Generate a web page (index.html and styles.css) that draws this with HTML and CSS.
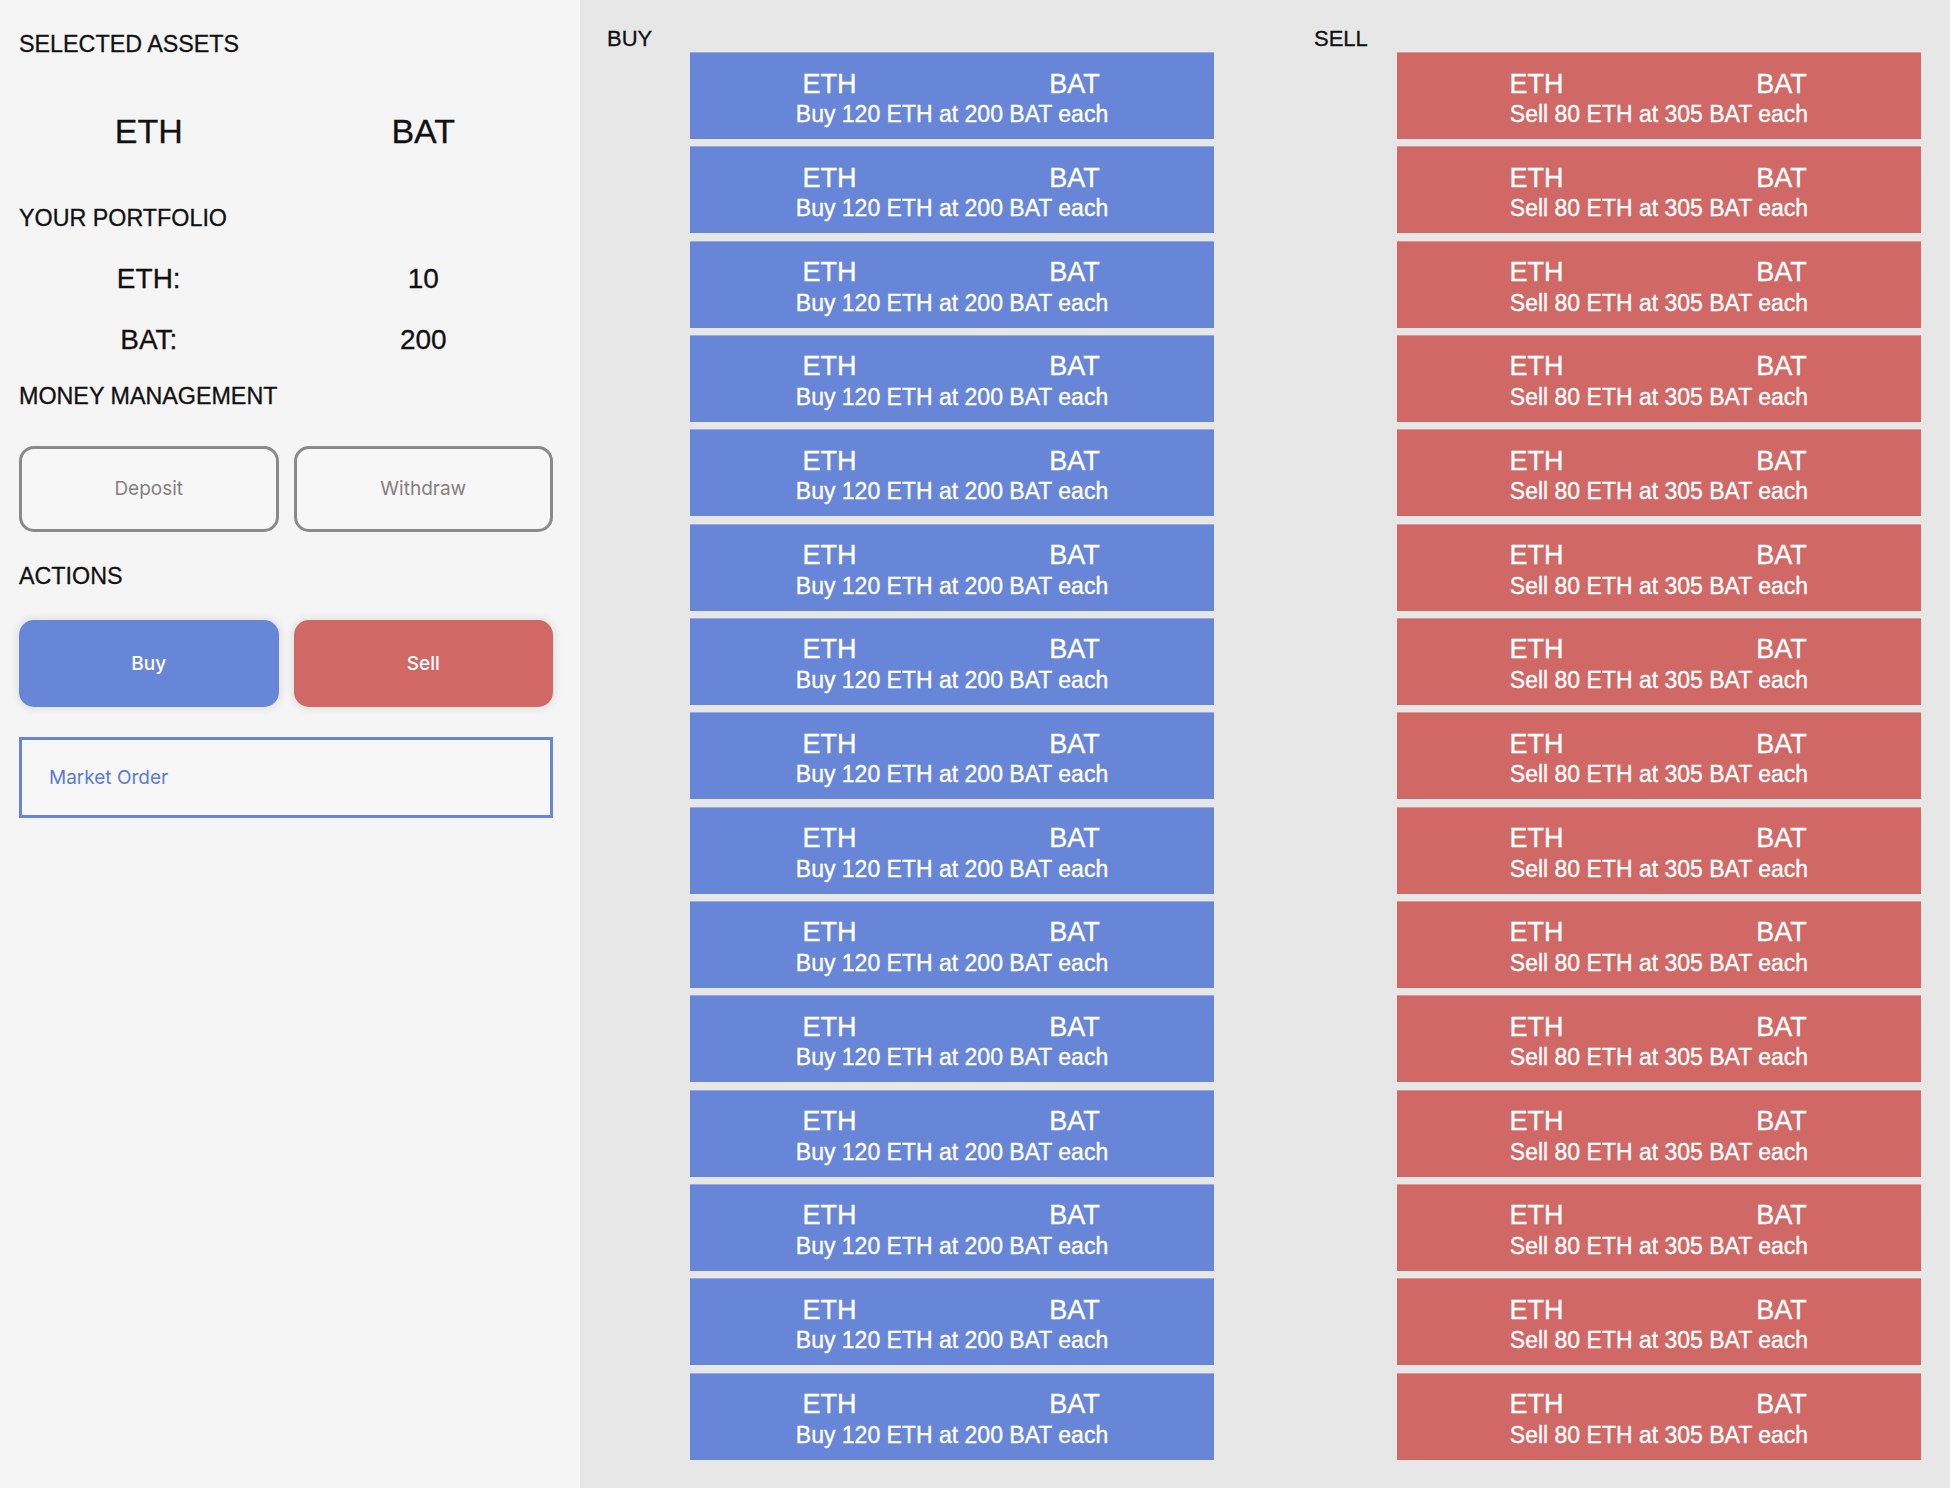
FILE: index.html
```html
<!DOCTYPE html>
<html lang="en">
<head>
<meta charset="utf-8">
<title>Exchange</title>
<link rel="stylesheet" href="styles.css">
</head>
<body>
<div class="app">
  <aside class="panel">
    <h2 class="heading heading-first">SELECTED ASSETS</h2>
    <div class="pair pair-big"><span>ETH</span><span>BAT</span></div>
    <h2 class="heading heading-portfolio">YOUR PORTFOLIO</h2>
    <div class="pair pair-bal pair-bal-first"><span>ETH:</span><span>10</span></div>
    <div class="pair pair-bal pair-bal-second"><span>BAT:</span><span>200</span></div>
    <h2 class="heading heading-money">MONEY MANAGEMENT</h2>
    <div class="btn-row btn-row-money">
      <button class="btn btn-outline">Deposit</button>
      <button class="btn btn-outline">Withdraw</button>
    </div>
    <h2 class="heading heading-actions">ACTIONS</h2>
    <div class="btn-row btn-row-actions">
      <button class="btn btn-buy">Buy</button>
      <button class="btn btn-sell">Sell</button>
    </div>
    <div class="order-type">Market Order</div>
  </aside>
  <main class="book">
    <section class="side">
      <h3 class="side-title">BUY</h3>
      <div class="orders">
        <div class="order order-buy"><div class="order-pair"><span>ETH</span><span>BAT</span></div><div class="order-desc">Buy 120 ETH at 200 BAT each</div></div>
        <div class="order order-buy"><div class="order-pair"><span>ETH</span><span>BAT</span></div><div class="order-desc">Buy 120 ETH at 200 BAT each</div></div>
        <div class="order order-buy"><div class="order-pair"><span>ETH</span><span>BAT</span></div><div class="order-desc">Buy 120 ETH at 200 BAT each</div></div>
        <div class="order order-buy"><div class="order-pair"><span>ETH</span><span>BAT</span></div><div class="order-desc">Buy 120 ETH at 200 BAT each</div></div>
        <div class="order order-buy"><div class="order-pair"><span>ETH</span><span>BAT</span></div><div class="order-desc">Buy 120 ETH at 200 BAT each</div></div>
        <div class="order order-buy"><div class="order-pair"><span>ETH</span><span>BAT</span></div><div class="order-desc">Buy 120 ETH at 200 BAT each</div></div>
        <div class="order order-buy"><div class="order-pair"><span>ETH</span><span>BAT</span></div><div class="order-desc">Buy 120 ETH at 200 BAT each</div></div>
        <div class="order order-buy"><div class="order-pair"><span>ETH</span><span>BAT</span></div><div class="order-desc">Buy 120 ETH at 200 BAT each</div></div>
        <div class="order order-buy"><div class="order-pair"><span>ETH</span><span>BAT</span></div><div class="order-desc">Buy 120 ETH at 200 BAT each</div></div>
        <div class="order order-buy"><div class="order-pair"><span>ETH</span><span>BAT</span></div><div class="order-desc">Buy 120 ETH at 200 BAT each</div></div>
        <div class="order order-buy"><div class="order-pair"><span>ETH</span><span>BAT</span></div><div class="order-desc">Buy 120 ETH at 200 BAT each</div></div>
        <div class="order order-buy"><div class="order-pair"><span>ETH</span><span>BAT</span></div><div class="order-desc">Buy 120 ETH at 200 BAT each</div></div>
        <div class="order order-buy"><div class="order-pair"><span>ETH</span><span>BAT</span></div><div class="order-desc">Buy 120 ETH at 200 BAT each</div></div>
        <div class="order order-buy"><div class="order-pair"><span>ETH</span><span>BAT</span></div><div class="order-desc">Buy 120 ETH at 200 BAT each</div></div>
        <div class="order order-buy"><div class="order-pair"><span>ETH</span><span>BAT</span></div><div class="order-desc">Buy 120 ETH at 200 BAT each</div></div>
      </div>
    </section>
    <section class="side">
      <h3 class="side-title">SELL</h3>
      <div class="orders">
        <div class="order order-sell"><div class="order-pair"><span>ETH</span><span>BAT</span></div><div class="order-desc">Sell 80 ETH at 305 BAT each</div></div>
        <div class="order order-sell"><div class="order-pair"><span>ETH</span><span>BAT</span></div><div class="order-desc">Sell 80 ETH at 305 BAT each</div></div>
        <div class="order order-sell"><div class="order-pair"><span>ETH</span><span>BAT</span></div><div class="order-desc">Sell 80 ETH at 305 BAT each</div></div>
        <div class="order order-sell"><div class="order-pair"><span>ETH</span><span>BAT</span></div><div class="order-desc">Sell 80 ETH at 305 BAT each</div></div>
        <div class="order order-sell"><div class="order-pair"><span>ETH</span><span>BAT</span></div><div class="order-desc">Sell 80 ETH at 305 BAT each</div></div>
        <div class="order order-sell"><div class="order-pair"><span>ETH</span><span>BAT</span></div><div class="order-desc">Sell 80 ETH at 305 BAT each</div></div>
        <div class="order order-sell"><div class="order-pair"><span>ETH</span><span>BAT</span></div><div class="order-desc">Sell 80 ETH at 305 BAT each</div></div>
        <div class="order order-sell"><div class="order-pair"><span>ETH</span><span>BAT</span></div><div class="order-desc">Sell 80 ETH at 305 BAT each</div></div>
        <div class="order order-sell"><div class="order-pair"><span>ETH</span><span>BAT</span></div><div class="order-desc">Sell 80 ETH at 305 BAT each</div></div>
        <div class="order order-sell"><div class="order-pair"><span>ETH</span><span>BAT</span></div><div class="order-desc">Sell 80 ETH at 305 BAT each</div></div>
        <div class="order order-sell"><div class="order-pair"><span>ETH</span><span>BAT</span></div><div class="order-desc">Sell 80 ETH at 305 BAT each</div></div>
        <div class="order order-sell"><div class="order-pair"><span>ETH</span><span>BAT</span></div><div class="order-desc">Sell 80 ETH at 305 BAT each</div></div>
        <div class="order order-sell"><div class="order-pair"><span>ETH</span><span>BAT</span></div><div class="order-desc">Sell 80 ETH at 305 BAT each</div></div>
        <div class="order order-sell"><div class="order-pair"><span>ETH</span><span>BAT</span></div><div class="order-desc">Sell 80 ETH at 305 BAT each</div></div>
        <div class="order order-sell"><div class="order-pair"><span>ETH</span><span>BAT</span></div><div class="order-desc">Sell 80 ETH at 305 BAT each</div></div>
      </div>
    </section>
  </main>
</div>
</body>
</html>
```
FILE: styles.css
```css
* { box-sizing: border-box; }
html, body {
  margin: 0;
  padding: 0;
  height: 100%;
  overflow: hidden;
}
body {
  font-family: "Liberation Sans", Arial, sans-serif;
  color: #111;
  background: #e7e7e7;
}
.app {
  display: flex;
  height: 100vh;
}
.panel {
  width: 580px;
  flex: 0 0 580px;
  background: #f5f5f5;
  padding: 33px 27px 0 19px;
  display: flex;
  flex-direction: column;
  -webkit-text-stroke: 0.3px currentColor;
}
.heading {
  margin: 0;
  font-size: 23.3px;
  line-height: 23px;
  font-weight: normal;
  color: #111;
}
.heading-portfolio { margin-top: 59px; }
.heading-money { margin-top: 31px; }
.heading-actions { margin-top: 33px; }

.pair {
  display: grid;
  grid-template-columns: 1fr 1fr;
  column-gap: 15px;
  text-align: center;
}
.pair-big {
  margin-top: 58px;
  font-size: 34px;
  line-height: 34px;
}
.pair-bal {
  font-size: 28px;
  line-height: 28px;
}
.pair-bal-first { margin-top: 34.7px; }
.pair-bal-second { margin-top: 33px; }

.btn-row {
  display: grid;
  grid-template-columns: 1fr 1fr;
  column-gap: 15px;
}
.btn-row-money { margin-top: 38.3px; }
.btn-row-actions { margin-top: 32.3px; }
.btn {
  font-family: Inter, "Liberation Sans", sans-serif;
  font-size: 19px;
  display: flex;
  align-items: center;
  justify-content: center;
  border-radius: 15px;
  padding: 0;
  margin: 0;
  -webkit-text-stroke: 0;
}
.btn-outline {
  height: 85.7px;
  background: #f7f7f7;
  border: 3px solid #8a8a8a;
  color: #857f7f;
}
.btn-buy,
.btn-sell {
  height: 87.3px;
  border: none;
  color: #ffffff;
  font-weight: 500;
  box-shadow: 0 0 6px 3px rgba(0, 0, 0, 0.07);
}
.btn-buy { background: #6886d7; }
.btn-sell { background: #d06866; }

.order-type {
  margin-top: 30px;
  height: 81px;
  border: 3px solid #6886d7;
  background: #f7f7f7;
  display: flex;
  align-items: center;
  padding-left: 27px;
  font-family: Inter, "Liberation Sans", sans-serif;
  font-size: 19px;
  color: #5b7bd4;
  -webkit-text-stroke: 0;
}

.book {
  flex: 1;
  display: grid;
  grid-template-columns: 607px 607px;
  column-gap: 100px;
  padding: 28px 0 0 27px;
  align-content: start;
}
.side-title {
  margin: 0 0 2px 0;
  font-size: 22px;
  line-height: 22px;
  font-weight: normal;
  color: #111;
  -webkit-text-stroke: 0.3px currentColor;
}
.orders {
  margin-left: 83px;
  width: 524px;
  display: flex;
  flex-direction: column;
  gap: 7.33px;
}
.order {
  height: 87px;
  padding-top: 18.5px;
  color: #ffffff;
  text-align: center;
  border-top: 1px solid rgba(255, 255, 255, 0.3);
  -webkit-text-stroke: 0.35px currentColor;
}
.order-buy { background: #6886d7; }
.order-sell { background: #d06866; }
.order-pair {
  display: grid;
  grid-template-columns: 245px 245px;
  justify-content: center;
  font-size: 27px;
  line-height: 27px;
  margin-bottom: 5.5px;
  margin-top: -1px;
}
.order-desc {
  font-size: 23px;
  line-height: 23px;
}
```
